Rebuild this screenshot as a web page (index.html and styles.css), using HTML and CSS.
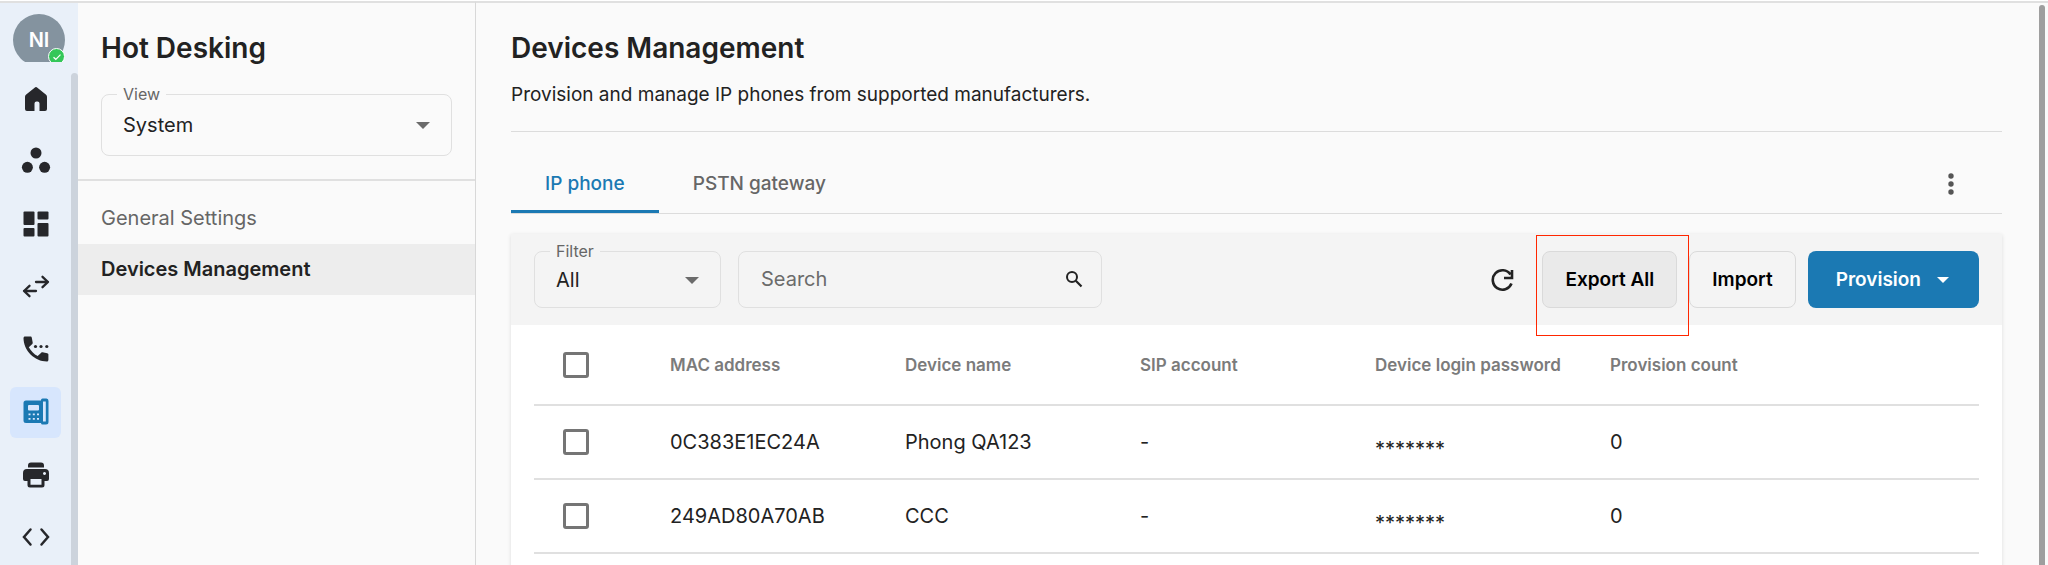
FILE: index.html
```html
<!DOCTYPE html>
<html lang="en">
<head>
  <meta charset="UTF-8" />
  <meta name="viewport" content="width=device-width, initial-scale=1.0"/>
  <title>Devices Management</title>
  <link rel="stylesheet" href="styles.css">
</head>
<body>
  <div class="app">
    <!-- Icon rail -->
    <nav class="rail" aria-label="Main">
      <div class="rail-user">
        <div class="avatar">NI</div>
        <span class="status">
          <svg width="10" height="8" viewBox="0 0 10 8"><path d="M1.5 4.2l2.3 2.1L8.5 1.6" fill="none" stroke="#fff" stroke-width="1.2"/></svg>
        </span>
      </div>
      <div class="rail-body">
        <div class="rail-list">
          <a href="#" class="rail-item" aria-label="Home">
            <svg viewBox="0 0 32 32"><path d="M14.6 4.7a2 2 0 0 1 2.8 0l8.4 6.7a3 3 0 0 1 1.2 2.4V26a2 2 0 0 1-2 2h-5.500v-7.500a2 2 0 0 0-2-2h-1a2 2 0 0 0-2 2V28H7a2 2 0 0 1-2-2V13.800a3 3 0 0 1 1.200-2.400z"/></svg>
          </a>
          <a href="#" class="rail-item" aria-label="Groups">
            <svg viewBox="0 0 32 32"><circle cx="16" cy="8" r="5.500"/><circle cx="7.400" cy="22.300" r="5.500"/><circle cx="24.600" cy="22.300" r="5.500"/></svg>
          </a>
          <a href="#" class="rail-item" aria-label="Dashboard">
            <svg viewBox="0 0 32 32"><rect x="3.500" y="3.500" width="11" height="13.500" rx="1"/><rect x="17.500" y="3.500" width="11" height="8" rx="1"/><rect x="3.500" y="20" width="11" height="8.500" rx="1"/><rect x="17.500" y="15" width="11" height="13.500" rx="1"/></svg>
          </a>
          <a href="#" class="rail-item" aria-label="Transfer">
            <svg viewBox="0 0 32 32"><path d="M16 11h12M22.500 5.800l5.500 5.200-5.500 5.200M16 20H4M9.500 14.800L4 20l5.500 5.200" fill="none" stroke="#26272b" stroke-width="2.300" stroke-linecap="round" stroke-linejoin="round"/></svg>
          </a>
          <a href="#" class="rail-item" aria-label="Calls">
            <svg viewBox="0 0 32 32"><path d="M5 3.500h5.500c.700 0 1.200.500 1.300 1.200l.9 4.900c.1.500 0 1-.4 1.300l-3.500 3.300c2 3.600 5.200 6.800 8.900 8.900l3.500-3.400c.4-.4.900-.500 1.400-.4l4.600.9c.7.100 1.200.700 1.200 1.300V27c0 .800-.700 1.500-1.500 1.500C14.500 28.500 3.500 17.500 3.500 5c0-.800.700-1.500 1.500-1.500z"/><circle cx="15.500" cy="13.500" r="1.600"/><circle cx="21" cy="13.500" r="1.600"/><circle cx="26.800" cy="13.500" r="1.600"/></svg>
          </a>
          <a href="#" class="rail-item active" aria-label="Hot desking">
            <svg viewBox="0 0 32 32"><path fill-rule="evenodd" d="M6 4.500h15V4a1.500 1.500 0 0 1 1.500-1.500h4A2.500 2.500 0 0 1 28.500 5v21a2.500 2.500 0 0 1-2.500 2.500h-3.500A1.500 1.500 0 0 1 21 27H6A2.500 2.500 0 0 1 3.500 24.500V7A2.500 2.500 0 0 1 6 4.500zM9 9a1 1 0 0 0-1 1v3.500a1 1 0 0 0 1 1h9a1 1 0 0 0 1-1V10a1 1 0 0 0-1-1zM23 5.500v20h2.800v-20zM8.500 17.500v1.800h2v-1.800zM12.800 17.500v1.800h2v-1.800zM17 17.500v1.800h2v-1.800zM8.500 22v1.800h2V22zM12.800 22v1.800h2V22zM17 22v1.800h2V22z"/></svg>
          </a>
          <a href="#" class="rail-item" aria-label="Printers">
            <svg viewBox="0 0 32 32"><path fill-rule="evenodd" d="M8 8.500V6.500a3 3 0 0 1 3-3h10a3 3 0 0 1 3 3v2zM7 10h18a4 4 0 0 1 4 4v6a2 2 0 0 1-2 2h-2.500v4a2.500 2.500 0 0 1-2.500 2.500H10A2.500 2.500 0 0 1 7.500 26v-4H5a2 2 0 0 1-2-2v-6a4 4 0 0 1 4-4zM10.500 20v5.800h11V20zM24.500 13a1.500 1.500 0 1 0 .01 0z"/></svg>
          </a>
          <a href="#" class="rail-item" aria-label="Developers">
            <svg viewBox="0 0 32 32"><path d="M10.500 8.500L4 16l6.500 7.500M21.500 8.500L28 16l-6.500 7.500" fill="none" stroke="#26272b" stroke-width="2.500" stroke-linecap="round"/></svg>
          </a>
        </div>
        <div class="rail-scroll"></div>
      </div>
    </nav>

    <!-- Section menu -->
    <aside class="sidebar">
      <div class="sidebar-top">
        <h2>Hot Desking</h2>
        <div class="field field-view">
          <label for="view">View</label>
          <select id="view"><option>System</option></select>
          <span class="caret"></span>
        </div>
      </div>
      <nav class="menu" aria-label="Hot Desking">
        <a href="#">General Settings</a>
        <a href="#" class="active">Devices Management</a>
      </nav>
    </aside>

    <main class="main">
      <header class="page-header">
        <h1>Devices Management</h1>
        <p>Provision and manage IP phones from supported manufacturers.</p>
      </header>

      <div class="tabs">
        <button class="tab active">IP phone</button>
        <button class="tab">PSTN gateway</button>
        <button class="more" aria-label="More">
          <svg width="6" height="22" viewBox="0 0 6 22"><circle cx="3" cy="3" r="2.700"/><circle cx="3" cy="11" r="2.700"/><circle cx="3" cy="19" r="2.700"/></svg>
        </button>
      </div>

      <section class="card">
        <div class="toolbar">
          <div class="field field-filter">
            <label for="filter">Filter</label>
            <select id="filter"><option>All</option></select>
            <span class="caret"></span>
          </div>
          <div class="search">
            <input type="text" placeholder="Search" aria-label="Search">
            <svg width="18" height="18" viewBox="0 0 18 18"><circle cx="7" cy="7" r="5" fill="none" stroke="#222" stroke-width="2"/><path d="M10.800 10.800l5.700 5.700" stroke="#222" stroke-width="2.200"/></svg>
          </div>
          <button class="refresh" aria-label="Refresh">
            <svg width="24" height="24" viewBox="0 0 24 24"><path d="M20.500 6.500A9.700 9.700 0 1 0 21.500 15.500M22 2v8h-8" fill="none" stroke="#222" stroke-width="2.600"/></svg>
          </button>
          <div class="actions">
            <div class="highlight"><button class="btn btn-export">Export All</button></div>
            <button class="btn">Import</button>
            <button class="btn btn-primary">Provision <span class="caret"></span></button>
          </div>
        </div>

        <div class="table-wrap">
          <table>
            <thead>
              <tr>
                <th class="check"><input type="checkbox" aria-label="Select all"></th>
                <th>MAC address</th>
                <th>Device name</th>
                <th>SIP account</th>
                <th>Device login password</th>
                <th class="last">Provision count</th>
              </tr>
            </thead>
            <tbody>
              <tr>
                <td class="check"><input type="checkbox" aria-label="Select 0C383E1EC24A"></td>
                <td>0C383E1EC24A</td>
                <td>Phong QA123</td>
                <td>-</td>
                <td class="password">*******</td>
                <td>0</td>
              </tr>
              <tr>
                <td class="check"><input type="checkbox" aria-label="Select 249AD80A70AB"></td>
                <td>249AD80A70AB</td>
                <td>CCC</td>
                <td>-</td>
                <td class="password">*******</td>
                <td>0</td>
              </tr>
            </tbody>
          </table>
        </div>
      </section>
      <div class="page-scroll"></div>
    </main>
  </div>
</body>
</html>
```
FILE: styles.css
```css
* {
  box-sizing: border-box;
}

body {
  margin: 0;
  font-family: Inter, sans-serif;
  font-size: 20px;
  line-height: 24px;
  color: #222;
  background-color: #fafafa;
}

button, input, select {
  font: inherit;
  color: inherit;
}

button {
  border: none;
  background: none;
  padding: 0;
  cursor: pointer;
}

a {
  color: inherit;
  text-decoration: none;
}

h1, h2 {
  margin: 0;
  font-size: 28px;
  line-height: 34px;
  font-weight: 600;
}

.app {
  display: flex;
  height: 100vh;
  overflow: hidden;
  border-top: 1px solid #fff;
}

/* icon rail */
.rail {
  display: flex;
  flex-direction: column;
  flex: none;
  width: 78px;
  background-color: #e9f0f9;
  border-top: 2px solid #e0e0e0;
}

.rail-user {
  position: relative;
  height: 59px;
  margin-bottom: 11px;
  padding: 11px 13px 0;
  overflow: hidden;
}

.avatar {
  width: 52px;
  height: 52px;
  border-radius: 50%;
  background-color: #84939f;
  color: #fff;
  font-weight: 600;
  line-height: 52px;
  text-align: center;
}

.status {
  position: absolute;
  left: 48px;
  top: 45px;
  display: flex;
  align-items: center;
  justify-content: center;
  width: 17px;
  height: 17px;
  border: 1px solid #fff;
  border-radius: 50%;
  background-color: #34c759;
}

.rail-body {
  display: flex;
  flex: 1;
  min-height: 0;
}

.rail-list {
  display: flex;
  flex-direction: column;
  justify-content: space-between;
  align-items: center;
  flex: 1;
  padding-bottom: 2px;
}

.rail-item {
  display: flex;
  align-items: center;
  justify-content: center;
  width: 51px;
  height: 51px;
  border-radius: 6px;
}

.rail-item svg {
  width: 32px;
  height: 32px;
  fill: #26272b;
}

.rail-item.active {
  background-color: #d7e6fd;
}

.rail-item.active svg {
  fill: #1b79b3;
}

.rail-scroll {
  width: 7px;
  border-radius: 4px 4px 0 0;
  background-color: #ccd3dc;
}

/* section menu */
.sidebar {
  flex: none;
  width: 398px;
  border-top: 2px solid #e0e0e0;
  border-right: 1px solid #d8d8d8;
}

.sidebar-top {
  padding: 28px 23px 23px;
  border-bottom: 2px solid #e0e0e0;
}

.menu {
  padding-top: 12px;
}

.menu a {
  display: block;
  padding: 13px 23px 14px;
  color: #666;
}

.menu a.active {
  background-color: #ededed;
  color: #222;
  font-weight: 600;
}

/* outlined fields */
.field {
  position: relative;
  background-color: #fafafa;
}

.field label {
  position: absolute;
  left: 16px;
  top: -10px;
  padding: 0 6px;
  background-color: inherit;
  color: #666;
  font-size: 16px;
  line-height: 20px;
}

.field select {
  display: block;
  width: 100%;
  height: 57px;
  padding: 0 21px;
  border: 1px solid #e0e0e0;
  border-radius: 8px;
  background: none;
  appearance: none;
}

.field .caret {
  position: absolute;
  right: 22px;
  top: 50%;
  margin-top: -3px;
}

.caret {
  border: 7px solid transparent;
  border-top-color: #6b6b6b;
  border-bottom: none;
  pointer-events: none;
}

.field-view {
  margin-top: 29px;
}

.field-view select {
  height: 62px;
}

/* page */
.main {
  position: relative;
  flex: 1;
  min-width: 0;
  padding: 28px 46px 0 35px;
  border-top: 2px solid #e0e0e0;
}

.page-header {
  padding-bottom: 24px;
  border-bottom: 1px solid #dcdcdc;
}

.page-header p {
  margin: 18px 0 0;
  font-size: 19px;
}

.tabs {
  display: flex;
  margin-top: 24px;
  border-bottom: 1px solid #dcdcdc;
}

.tab {
  height: 57px;
  padding: 2px 34px 0;
  border-bottom: 3px solid transparent;
  color: #666;
  font-size: 19px;
  font-weight: 500;
}

.tab.active {
  border-bottom-color: #1b79b3;
  color: #1b79b3;
}

.more {
  display: flex;
  align-items: center;
  margin-left: auto;
  padding: 0 48px 2px;
}

.more svg {
  fill: #555;
}

.card {
  height: 100%;
  margin-top: 20px;
  background-color: #fff;
  box-shadow: 0 1px 4px rgba(0, 0, 0, 0.12);
}

.toolbar {
  display: flex;
  align-items: center;
  padding: 17px 23px;
  background-color: #f4f4f4;
}

.field-filter {
  width: 187px;
  background-color: #f4f4f4;
}

.search {
  display: flex;
  align-items: center;
  width: 364px;
  height: 57px;
  margin-left: 17px;
  padding: 0 18px 2px 22px;
  border: 1px solid #e0e0e0;
  border-radius: 8px;
}

.search input {
  flex: 1;
  min-width: 0;
  padding: 0;
  border: none;
  outline: none;
  background: none;
}

.search input::placeholder {
  color: #6b6b6b;
}

.refresh {
  display: flex;
  margin-left: auto;
}

.actions {
  display: flex;
  gap: 12px;
  margin-left: 28px;
}

.btn {
  height: 57px;
  padding: 0 22px;
  border: 1px solid #dadada;
  border-radius: 8px;
  color: #000;
  font-size: 19px;
  font-weight: 600;
}

.btn-export {
  background-color: #eaeaea;
}

.btn-primary {
  display: flex;
  align-items: center;
  gap: 16px;
  padding: 0 30px 0 28px;
  border: none;
  background-color: #1b79b3;
  color: #fff;
}

.btn-primary .caret {
  border-width: 6px;
  border-bottom: none;
  border-top-color: #fff;
}

/* red frame round the export button */
.highlight {
  position: relative;
}

.highlight::after {
  content: "";
  position: absolute;
  inset: -16px -12px -28px -6px;
  border: 1px solid #ff2600;
  pointer-events: none;
}

.table-wrap {
  padding: 0 23px;
}

table {
  width: 100%;
  border-collapse: collapse;
  table-layout: fixed;
}

th, td {
  height: 74px;
  padding: 0;
  border-bottom: 2px solid #e0e0e0;
  text-align: left;
  font-weight: 400;
}

th {
  width: 235px;
  height: 80px;
  color: #7b7b7b;
  font-size: 17px;
  font-weight: 600;
}

th.check {
  width: 136px;
}

th.last {
  width: auto;
}

.check {
  padding-left: 29px;
}

.check input {
  display: block;
  width: 26px;
  height: 26px;
  margin: 0;
  border: 3px solid #757575;
  border-radius: 3px;
  background-color: #fff;
  appearance: none;
}

.password {
  padding-top: 14px;
}

.page-scroll {
  position: absolute;
  top: 2px;
  right: 3px;
  bottom: 0;
  width: 6px;
  border-radius: 3px 3px 0 0;
  background-color: #9e9e9e;
}
```
